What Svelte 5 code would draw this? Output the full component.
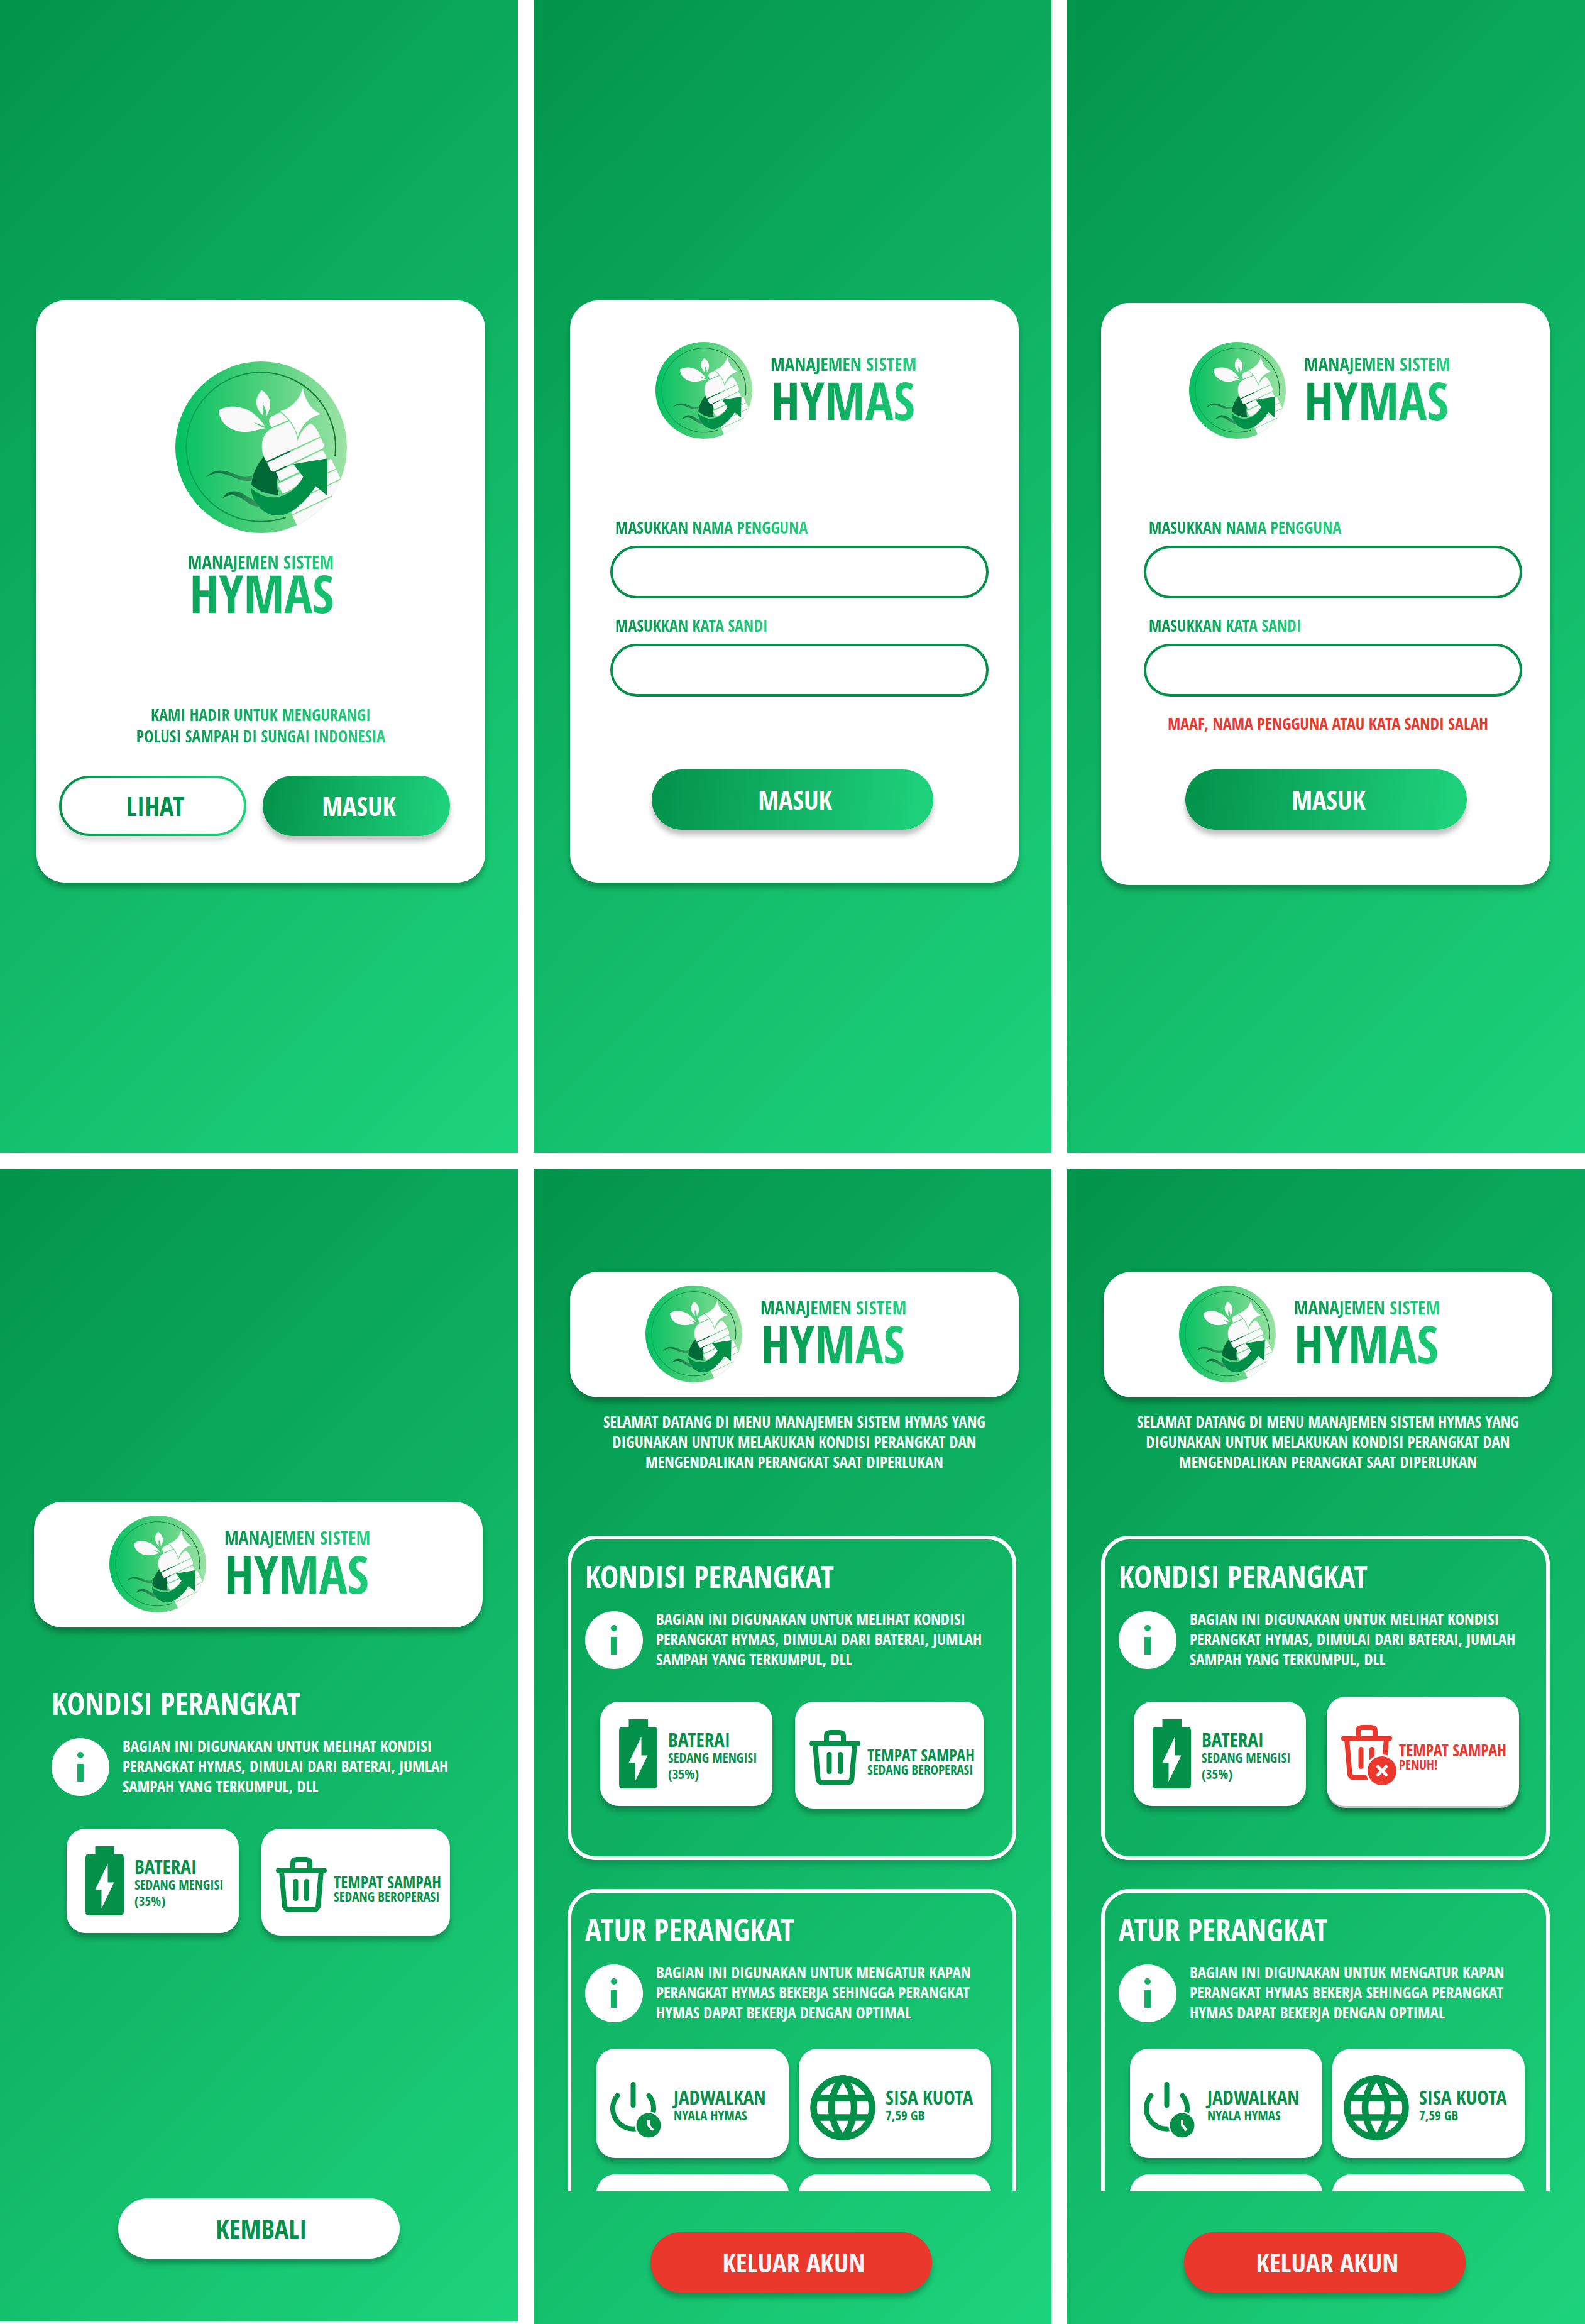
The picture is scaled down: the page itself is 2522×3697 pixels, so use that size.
<script>
  const logins = [
    { id: 'login', failed: false },
    { id: 'login-failed', failed: true }
  ];
  const menus = [
    { id: 'menu', full: false },
    { id: 'menu-full', full: true }
  ];
  const conditionText = [
    'BAGIAN INI DIGUNAKAN UNTUK MELIHAT KONDISI',
    'PERANGKAT HYMAS, DIMULAI DARI BATERAI, JUMLAH',
    'SAMPAH YANG TERKUMPUL, DLL'
  ];
  const controlText = [
    'BAGIAN INI DIGUNAKAN UNTUK MENGATUR KAPAN',
    'PERANGKAT HYMAS BEKERJA SEHINGGA PERANGKAT',
    'HYMAS DAPAT BEKERJA DENGAN OPTIMAL'
  ];
</script>

{#snippet logo(id)}
  <svg class="logo" viewBox="54 44 818 818" role="img" aria-label="Logo HYMAS">
    <defs>
      <linearGradient id="{id}-disc" x1="0" x2="1" y1="0" y2="0">
        <stop offset="0" stop-color="#02c062" />
        <stop offset="0.4" stop-color="#3fcc74" />
        <stop offset="1" stop-color="#9ce3a5" />
      </linearGradient>
      <linearGradient id="{id}-ring" x1="0" x2="1" y1="0" y2="0">
        <stop offset="0" stop-color="#0ba556" />
        <stop offset="1" stop-color="#17752f" />
      </linearGradient>
      <linearGradient id="{id}-wave" x1="0" x2="1" y1="0" y2="0">
        <stop offset="0" stop-color="#006837" />
        <stop offset="1" stop-color="#3a9a62" />
      </linearGradient>
      <clipPath id="{id}-clip"><circle cx="463" cy="453" r="409" /></clipPath>
    </defs>
    <circle cx="463" cy="453" r="409" fill="url(#{id}-disc)" />
    <path d="M815 497 A356 356 0 1 0 581 787" fill="none" stroke="url(#{id}-ring)" stroke-width="6" />
    <g fill="#f9f9f9">
      <path d="M261 276 C315 245 415 248 482 353 C465 347 448 342 428 334 C444 348 462 355 484 362 C448 366 425 381 382 380 C312 376 264 336 261 276Z" />
      <path d="M466 181 C495 200 512 228 505 262 C502 280 494 292 488 306 C489 284 484 264 472 249 C469 268 470 282 473 301 C432 268 430 215 466 181Z" />
      <path d="M556 286 L525 300 Q494 314 502 336 L512 358 L592 324 Q578 303 556 286Z" />
      <path d="M512 364 L597 329 Q625 362 638 412 Q655 368 695 338 Q722 348 745 401 L490 520 Q480 506 472 485 C458 430 474 385 512 364Z" />
      <path d="M493 527 L747 407 L760 436 Q765 454 750 462 L528 568 Q514 573 507 560Z" />
      <path d="M534 573 L748 470 Q757 466 762 474 L778 508 L617 533 L646 570 L552 614Z" />
      <path d="M541 628 L650 577 L664 594 C645 632 612 655 566 674Z" />
      <g clip-path="url(#{id}-clip)">
        <path d="M780 515 L797 508 L850 620 L860 740 L650 860 L606 765 L724 638 L776 682Z" />
      </g>
    </g>
    <g fill="none" stroke="#79d98a" stroke-width="5">
      <path d="M780 576 L821 557 M690 678 L842 605 M612 775 L800 686" />
      <path d="M556 286 Q624 335 638 412 Q655 362 700 334" />
    </g>
    <path d="M662 171 Q678 262 748 295 Q668 312 638 402 Q617 328 555 281 Q637 255 662 171Z" fill="#fff" />
    <path d="M475 498 C440 540 418 590 417 632 Q470 680 546 679 C537 640 537 612 543 594 L532 569 Q514 573 507 560Z" fill="#006837" />
    <path d="M490 523 L601 472 M526 571 L585 543" stroke="#006837" stroke-width="6" />
    <path d="M779 506 L617 533 L664 594 C640 640 590 688 530 692 C480 695 440 670 415 648 C416 712 470 780 545 778 C620 776 690 692 724 638 L776 682Z" fill="#009048" />
    <path d="M200 597 C240 550 288 560 340 582 C380 600 400 596 421 588 L418 612 C380 620 345 602 310 588 C270 572 236 570 200 597Z" fill="url(#{id}-wave)" />
    <path d="M278 698 C300 656 345 655 378 676 C412 699 432 700 456 736 C420 738 400 715 370 698 C335 676 310 676 278 698Z" fill="url(#{id}-wave)" />
  </svg>
{/snippet}

{#snippet brand(id)}
  <div class="brand">
    {@render logo(id)}
    <div class="brand-text">
      <p class="system">MANAJEMEN SISTEM</p>
      <h1 class="name">HYMAS</h1>
    </div>
  </div>
{/snippet}

{#snippet info(lines)}
  <div class="info">
    <svg class="info-icon" viewBox="0 0 92 92" aria-hidden="true">
      <circle cx="46" cy="46" r="46" fill="#fff" />
      <circle cx="46" cy="27" r="5" fill="#11b064" />
      <rect x="41" y="41" width="10" height="28" fill="#11b064" />
    </svg>
    <p>
      {#each lines as line}<span class="line">{line}</span>{/each}
    </p>
  </div>
{/snippet}

{#snippet condition(full)}
  <h2>KONDISI PERANGKAT</h2>
  {@render info(conditionText)}
  <div class="status">
    <div class="tile battery">
      <svg class="battery-icon" viewBox="0 0 61 110" aria-hidden="true">
        <path d="M15.500 0H46V12H55Q61 12 61 18V104Q61 110 55 110H6Q0 110 0 104V18Q0 12 6 12H15.500Z" fill="#03914a" />
        <path d="M35.500 27.500V57.500H45.500L25.500 99V69H15.500Z" fill="#fff" />
      </svg>
      <div class="tile-text">
        <h3>BATERAI</h3>
        <p>SEDANG MENGISI</p>
        <p>(35%)</p>
      </div>
    </div>
    <div class="tile bin" class:full>
      <svg class="bin-icon" viewBox="0 0 88 96" aria-hidden="true">
        <g fill="none" stroke="currentColor" stroke-width="8" stroke-linecap="round">
          <path d="M4 21.500H77" />
          <path d="M27 20V10Q27 4 33 4H48Q54 4 54 10V20" />
          <path d="M9 22L13.500 76Q14 84 22 84H59Q67 84 67.500 76L72 22" />
          <path d="M31.500 39V66M49 39V66" />
        </g>
        {#if full}
          <circle cx="65" cy="73" r="26" fill="#fff" />
          <circle cx="65" cy="73" r="23" fill="currentColor" />
          <path d="M58.500 66.500L71.500 79.500M71.500 66.500L58.500 79.500" stroke="#fff" stroke-width="5" stroke-linecap="round" />
        {/if}
      </svg>
      <div class="tile-text">
        <h3>TEMPAT SAMPAH</h3>
        <p>{full ? 'PENUH!' : 'SEDANG BEROPERASI'}</p>
      </div>
    </div>
  </div>
{/snippet}

<main>
  <section class="screen welcome">
    <div class="card">
      <div class="brand stacked">
        {@render logo('welcome')}
        <div class="brand-text">
          <p class="system">MANAJEMEN SISTEM</p>
          <h1 class="name">HYMAS</h1>
        </div>
      </div>
      <p class="tagline">
        <span class="line">KAMI HADIR UNTUK MENGURANGI</span>
        <span class="line">POLUSI SAMPAH DI SUNGAI INDONESIA</span>
      </p>
      <div class="actions">
        <button class="pill outline" type="button">LIHAT</button>
        <button class="pill primary" type="button">MASUK</button>
      </div>
    </div>
  </section>

  {#each logins as login}
    <section class="screen login" class:failed={login.failed}>
      <div class="card">
        {@render brand(login.id)}
        <form onsubmit={(e) => e.preventDefault()}>
          <div class="field">
            <label for="{login.id}-user">MASUKKAN NAMA PENGGUNA</label>
            <input id="{login.id}-user" type="text" autocomplete="off" />
          </div>
          <div class="field">
            <label for="{login.id}-pass">MASUKKAN KATA SANDI</label>
            <input id="{login.id}-pass" type="password" autocomplete="off" />
          </div>
          <p class="message" role="status">
            {#if login.failed}MAAF, NAMA PENGGUNA ATAU KATA SANDI SALAH{/if}
          </p>
          <button class="pill primary wide" type="submit">MASUK</button>
        </form>
      </div>
    </section>
  {/each}

  <section class="screen device">
    <header>{@render brand('device')}</header>
    <div class="condition">
      {@render condition(false)}
    </div>
    <button class="pill light wide" type="button">KEMBALI</button>
  </section>

  {#each menus as menu}
    <section class="screen menu">
      <header>{@render brand(menu.id)}</header>
      <p class="intro">
        <span class="line">SELAMAT DATANG DI MENU MANAJEMEN SISTEM HYMAS YANG</span>
        <span class="line">DIGUNAKAN UNTUK MELAKUKAN KONDISI PERANGKAT DAN</span>
        <span class="line">MENGENDALIKAN PERANGKAT SAAT DIPERLUKAN</span>
      </p>
      <div class="panels">
        <div class="panel">
          {@render condition(menu.full)}
        </div>
        <div class="panel">
          <h2>ATUR PERANGKAT</h2>
          {@render info(controlText)}
          <div class="controls">
            <button class="tile control" type="button">
              <svg class="power-icon" viewBox="0 0 81 89" aria-hidden="true">
                <g fill="none" stroke="#03914a" stroke-width="8" stroke-linecap="round">
                  <path d="M36.500 4V37" />
                  <path d="M11.500 21.500A32.500 32.500 0 1 0 61.500 21.500" />
                </g>
                <circle cx="61" cy="69" r="22" fill="#fff" />
                <circle cx="61" cy="69" r="19.500" fill="#03914a" />
                <path d="M61 60V68.500L68 77" fill="none" stroke="#fff" stroke-width="4" />
              </svg>
              <span class="tile-text">
                <strong>JADWALKAN</strong>
                <span>NYALA HYMAS</span>
              </span>
            </button>
            <button class="tile control" type="button">
              <svg class="globe-icon" viewBox="0 0 104 104" aria-hidden="true">
                <g fill="none" stroke="#03914a" stroke-width="10.500">
                  <circle cx="52" cy="52" r="46.500" />
                  <path d="M10 36.500H94M10 67.500H94" />
                  <path d="M52 3C28 34 28 70 52 101C76 70 76 34 52 3Z" />
                </g>
              </svg>
              <span class="tile-text">
                <strong>SISA KUOTA</strong>
                <span>7,59 GB</span>
              </span>
            </button>
            <div class="tile control"></div>
            <div class="tile control"></div>
          </div>
        </div>
      </div>
      <button class="pill danger wide" type="button">KELUAR AKUN</button>
    </section>
  {/each}
</main>

<style>
  :global(body) {
    background: #fff;
  }

  main {
    --deep: #03914a;
    --bright: #1fd57e;
    --fade: linear-gradient(100deg, var(--deep), var(--bright));
    --shadow: 0 8px 8px rgba(0, 0, 0, 0.25);
    display: grid;
    grid-template-columns: repeat(3, minmax(0, 1fr));
    gap: 25px;
    align-items: start;
    font-family: 'Open Sans Condensed', 'Roboto Condensed', 'Open Sans', sans-serif;
    font-weight: 700;
    color: #fff;
  }

  h1, h2, h3, p {
    margin: 0;
    font-weight: 700;
  }

  button, input {
    font: inherit;
    margin: 0;
  }

  svg {
    display: block;
    flex: none;
  }

  .line {
    display: block;
    white-space: nowrap;
  }

  .screen {
    box-sizing: border-box;
    display: flex;
    flex-direction: column;
    min-height: 1834px;
    padding: 478px 52px 0 58px;
    background: linear-gradient(135deg, #02944b, #1dd37c);
  }

  .card, header {
    background: #fff;
    border-radius: 45px;
    box-shadow: var(--shadow);
  }

  /* Brand */
  .brand {
    display: flex;
    align-items: flex-start;
    gap: 29px;
  }

  .logo {
    width: 154px;
    height: 154px;
  }

  .brand-text {
    display: flex;
    flex-direction: column;
    align-items: flex-start;
    gap: 8px;
    padding-top: 19px;
  }

  .system, .name, .tagline, label {
    background: var(--fade);
    background-clip: text;
    -webkit-background-clip: text;
    color: transparent;
  }

  .system {
    font-size: 29px;
    line-height: 32px;
  }

  .name {
    padding-right: 32px;
    font-size: 83px;
    line-height: 66px;
  }

  .stacked {
    flex-direction: column;
    align-items: center;
    gap: 30px;
  }

  .stacked .logo {
    width: 273px;
    height: 273px;
  }

  .stacked .brand-text {
    align-items: flex-end;
    gap: 0;
    padding: 0;
  }

  .stacked .name {
    padding: 0;
    background-image: linear-gradient(100deg, #0ba45a, #18c271);
  }

  /* Pills */
  .pill {
    box-sizing: border-box;
    height: 96px;
    padding: 0 0 0 8px;
    border: 0;
    border-radius: 48px;
    box-shadow: var(--shadow);
    font-size: 42px;
    line-height: 48px;
    text-align: center;
  }

  .wide {
    width: 100%;
    max-width: 448px;
  }

  .primary {
    background: var(--fade);
    color: #fff;
  }

  .outline {
    border: 4px solid transparent;
    background: linear-gradient(#fff, #fff) padding-box, var(--fade) border-box;
    color: var(--deep);
    box-shadow: 0 8px 8px rgba(0, 0, 0, 0.12);
  }

  .light {
    background: #fff;
    color: var(--deep);
  }

  .danger {
    background: #ea382d;
    color: #f5f5f5;
  }

  /* Welcome */
  .welcome .card {
    padding: 97px 0 74px;
  }

  .tagline {
    width: fit-content;
    margin: 144px auto 46px;
    font-size: 26px;
    line-height: 34px;
    text-align: center;
  }

  .actions {
    display: grid;
    grid-template-columns: 1fr 1fr;
    gap: 26px;
    padding: 0 56px 0 36px;
  }

  /* Login */
  .login .card {
    padding: 66px 48px 84px 64px;
  }

  .login .brand {
    padding-left: 72px;
  }

  .failed {
    padding: 482px 56px 0 54px;
  }

  .failed .card {
    padding: 62px 44px 88px 68px;
  }

  form {
    display: flex;
    flex-direction: column;
    gap: 26px;
    margin-top: 124px;
  }

  .field {
    display: flex;
    flex-direction: column;
    align-items: flex-start;
    gap: 12px;
  }

  label {
    margin-left: 8px;
    padding-right: 16px;
    font-size: 26px;
    line-height: 34px;
  }

  input {
    box-sizing: border-box;
    width: 100%;
    height: 84px;
    padding: 0 36px;
    border: 4px solid var(--deep);
    border-radius: 42px;
    background: #fff;
    color: var(--deep);
    font-size: 26px;
  }

  .message {
    height: 34px;
    margin-bottom: 30px;
    padding-right: 16px;
    color: #ea382d;
    font-size: 26px;
    line-height: 34px;
    text-align: center;
    white-space: nowrap;
  }

  form .wide {
    margin-left: 66px;
  }

  /* Device status */
  .device {
    padding: 530px 56px 100px 54px;
  }

  header {
    padding: 22px 0 24px 120px;
  }

  .condition {
    margin-top: 90px;
  }

  h2 {
    padding: 0 28px;
    font-size: 49px;
    line-height: 60px;
  }

  .info {
    display: flex;
    align-items: flex-end;
    gap: 21px;
    margin-top: 22px;
    padding-left: 28px;
    font-size: 25px;
    line-height: 32px;
  }

  .info-icon {
    width: 92px;
    height: 92px;
  }

  .status {
    display: grid;
    grid-template-columns: 274fr 300fr;
    gap: 36px;
    align-items: start;
    margin-top: 52px;
    padding: 0 52px;
  }

  .tile {
    box-sizing: border-box;
    display: flex;
    border: 0;
    border-radius: 30px;
    background: #fff;
    box-shadow: var(--shadow);
    color: var(--deep);
    text-align: left;
    white-space: nowrap;
  }

  .tile-text {
    display: flex;
    flex-direction: column;
    font-size: 21px;
    line-height: 26px;
  }

  .tile h3, .tile strong {
    font-size: 31px;
    line-height: 32px;
  }

  .battery {
    gap: 17px;
    padding: 28px 0 28px 30px;
  }

  .battery-icon {
    width: 61px;
    height: 110px;
  }

  .battery .tile-text {
    padding-top: 16px;
  }

  .bin {
    gap: 4px;
    height: 170px;
    padding: 45px 0 0 23px;
  }

  .bin-icon {
    width: 88px;
    height: 96px;
  }

  .bin .tile-text {
    padding-top: 27px;
    line-height: 20px;
  }

  .bin h3 {
    font-size: 26px;
    line-height: 26px;
  }

  .full {
    height: 174px;
    margin: -8px -3px 4px;
    box-shadow: 0 4px 0 -1px #c4c4c4, 0 10px 10px rgba(0, 0, 0, 0.4);
    color: #ea382d;
  }

  .device .wide {
    margin: auto 0 0 134px;
  }

  /* Menu */
  .menu {
    min-height: 1838px;
    padding: 164px 56px 50px 54px;
  }

  .menu header {
    margin: 0 -4px 0 4px;
  }

  .intro {
    margin-top: 22px;
    padding-left: 8px;
    font-size: 25px;
    line-height: 32px;
    text-align: center;
  }

  .panels {
    display: flex;
    flex-direction: column;
    gap: 46px;
    height: 1042px;
    margin-top: 102px;
    overflow: hidden;
  }

  .panel {
    flex: none;
    padding: 28px 0 76px;
    border: 6px solid #fff;
    border-radius: 45px;
    box-shadow: 0 8px 8px rgba(0, 0, 0, 0.15);
  }

  .panel h2 {
    padding: 0 22px;
  }

  .panel .info {
    padding-left: 22px;
  }

  .panel .status {
    padding: 0 46px;
  }

  .controls {
    display: grid;
    grid-template-columns: 1fr 1fr;
    gap: 26px 16px;
    margin-top: 42px;
    padding: 0 34px 0 40px;
  }

  .control {
    gap: 16px;
    min-height: 174px;
    padding: 0 0 0 18px;
    align-items: flex-start;
  }

  .control .tile-text {
    padding-top: 61px;
  }

  .power-icon {
    width: 81px;
    height: 89px;
    margin: 53px 4px 0;
  }

  .globe-icon {
    width: 104px;
    height: 104px;
    margin-top: 42px;
  }

  .menu .wide {
    margin: auto 0 0 132px;
  }
</style>
